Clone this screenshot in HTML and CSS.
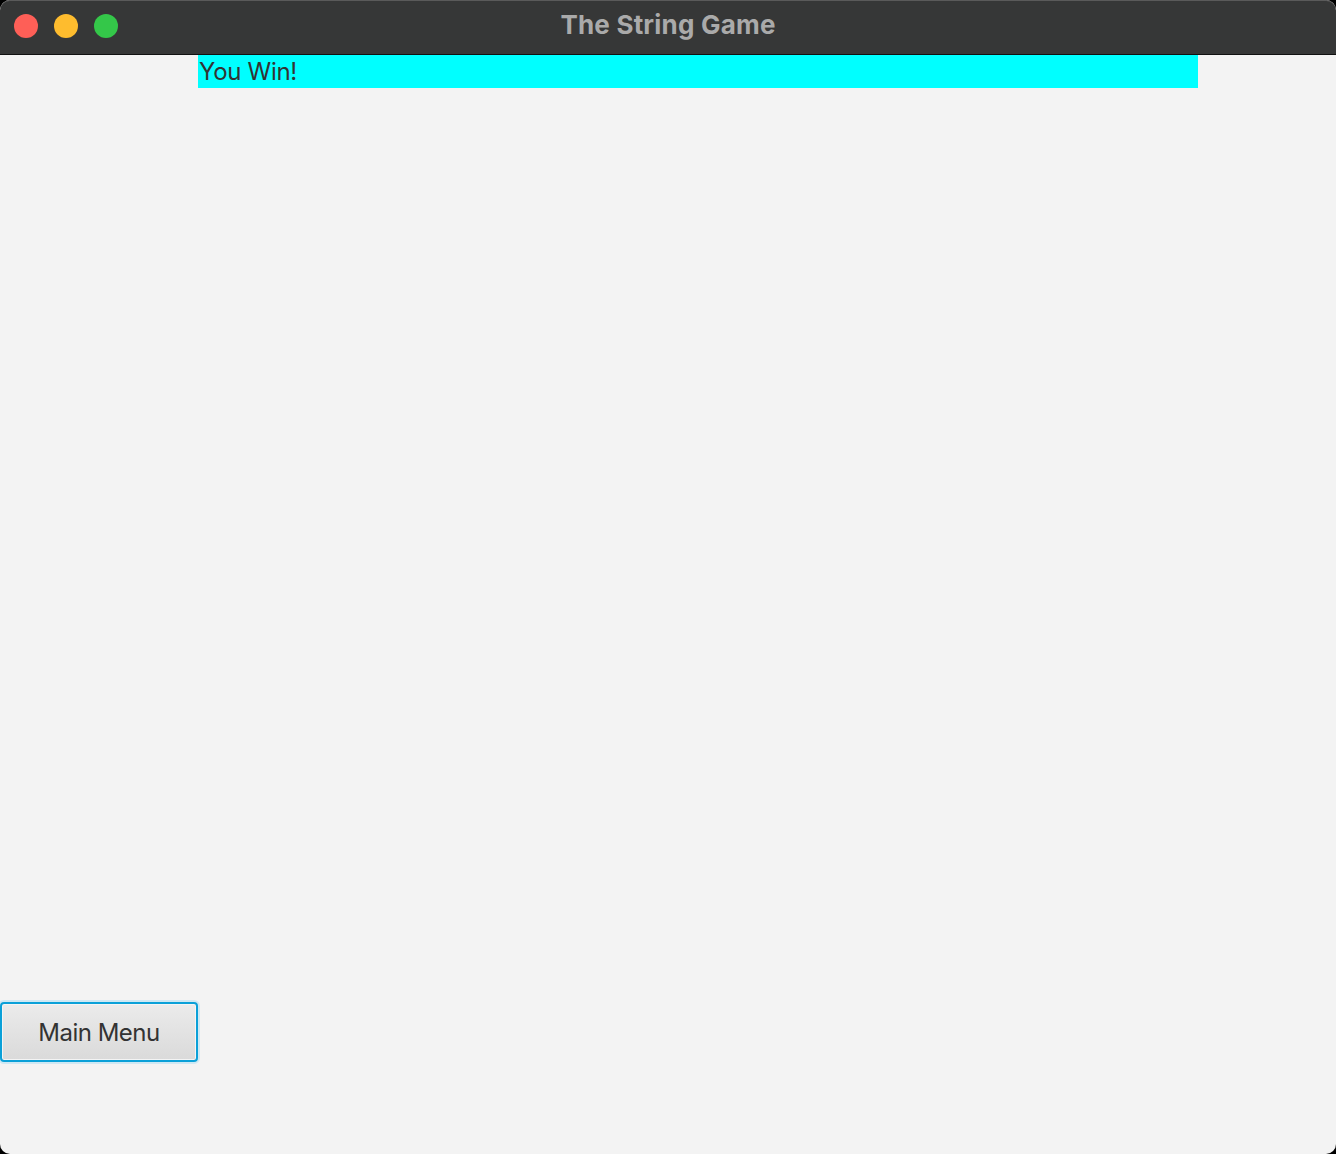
FILE: index.html
```html
<!DOCTYPE html>
<html>
<head>
<meta charset="utf-8">
<link rel="stylesheet" href="styles.css">
</head>
<body>
<div class="window">
  <div class="titlebar">
    <div class="lights">
      <span class="light red"></span>
      <span class="light yellow"></span>
      <span class="light green"></span>
    </div>
    <div class="title">The String Game</div>
  </div>
  <div class="content">
    <div class="banner">You Win!</div>
    <div class="spacer"></div>
    <button class="menu-btn">Main Menu</button>
  </div>
</div>
</body>
</html>
```
FILE: styles.css
```css
html, body {
  margin: 0;
  padding: 0;
  background: #000;
  width: 1336px;
  height: 1154px;
  overflow: hidden;
}
.window {
  width: 1336px;
  height: 1154px;
  border-radius: 10px;
  overflow: hidden;
  background: #f3f3f3;
  display: flex;
  flex-direction: column;
  font-family: Inter, "Noto Sans", sans-serif;
}
.titlebar {
  height: 55px;
  flex: none;
  background: #363737;
  border-bottom: 1px solid #111;
  position: relative;
  display: flex;
  align-items: center;
  justify-content: center;
  box-shadow: inset 0 1px 0 #5a5a5a;
  border-radius: 10px 10px 0 0;
  padding-bottom: 5px;
  box-sizing: border-box;
}
.lights {
  position: absolute;
  left: 14px;
  top: 14px;
  display: flex;
  gap: 16px;
}
.light {
  width: 24px;
  height: 24px;
  border-radius: 50%;
  display: block;
}
.red { background: #fe5f57; }
.yellow { background: #febc2e; }
.green { background: #34c749; }
.title {
  color: #aaaaaa;
  font-weight: 700;
  font-size: 26px;
  letter-spacing: 0.2px;
}
.content {
  flex: 1;
  display: flex;
  flex-direction: column;
  align-items: flex-start;
}
.banner {
  margin-left: 198px;
  width: 1000px;
  height: 33px;
  background: #00ffff;
  color: #333;
  font-size: 24px;
  line-height: 33px;
  padding-left: 1px;
  box-sizing: border-box;
  letter-spacing: -0.3px;
}
.spacer { flex: 1; }
.menu-btn {
  width: 198px;
  height: 60px;
  margin-bottom: 92px;
  border: 2px solid #0aa0d8;
  border-radius: 4px;
  background: linear-gradient(#ebebeb, #dadada);
  box-shadow: 0 0 0 2px #cfe8f3, inset 0 0 0 1px #f4f4f4;
  font-family: Inter, "Noto Sans", sans-serif;
  font-size: 24px;
  letter-spacing: -0.5px;
  color: #333;
  padding: 0;
}
```
